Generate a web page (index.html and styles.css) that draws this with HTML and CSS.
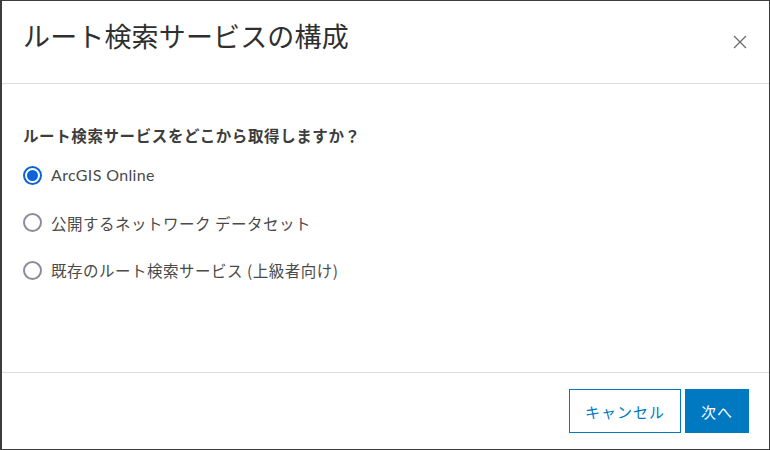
FILE: index.html
```html
<!DOCTYPE html>
<html lang="ja">
<head>
<meta charset="utf-8">
<title>ルート検索サービスの構成</title>
<link rel="stylesheet" href="styles.css">
</head>
<body>
<div class="dialog">
  <header class="dlg-header">
    <h1 class="dlg-title">ルート検索サービスの構成</h1>
    <button class="dlg-close" aria-label="閉じる">
      <svg width="14" height="14" viewBox="0 0 14 14"><path d="M1 1 L13 13 M13 1 L1 13" stroke="#6b6b6b" stroke-width="1.3" fill="none"/></svg>
    </button>
  </header>
  <main class="dlg-body">
    <p class="question">ルート検索サービスをどこから取得しますか？</p>
    <div class="options">
      <label class="option"><span class="radio checked"></span><span class="opt-label latin">ArcGIS Online</span></label>
      <label class="option"><span class="radio"></span><span class="opt-label">公開するネットワーク データセット</span></label>
      <label class="option"><span class="radio"></span><span class="opt-label">既存のルート検索サービス (上級者向け)</span></label>
    </div>
  </main>
  <footer class="dlg-footer">
    <button class="btn btn-outline">キャンセル</button>
    <button class="btn btn-primary">次へ</button>
  </footer>
</div>
</body>
</html>
```
FILE: styles.css
```css
html, body {
  margin: 0;
  padding: 0;
  background: #ffffff;
}
body {
  font-family: "Noto Sans CJK JP", "Noto Sans", sans-serif;
  color: #4a4a4a;
}
.dialog {
  box-sizing: border-box;
  width: 770px;
  height: 450px;
  border: 1px solid #3c3c3c;
  border-left-width: 2px;
  display: flex;
  flex-direction: column;
  background: #fff;
}
.dlg-header {
  height: 82px;
  border-bottom: 1px solid #dddddd;
  display: flex;
  justify-content: space-between;
  align-items: center;
  padding: 0 20px 0 21px;
  flex: none;
}
.dlg-title {
  margin: 0 0 13px 0;
  font-size: 27px;
  font-weight: 400;
  line-height: 40px;
  color: #2f2f2f;
  letter-spacing: 0.15px;
}
.dlg-close {
  border: 0;
  background: none;
  padding: 0;
  width: 14px;
  height: 14px;
  margin-right: 2px;
  display: flex;
}
.dlg-body {
  flex: 1;
  padding: 0 21px;
}
.question {
  margin: 39px 0 16px 0;
  font-size: 15.5px;
  font-weight: 700;
  line-height: 24px;
  color: #3d3d3d;
  letter-spacing: 0.6px;
}
.options {
  display: flex;
  flex-direction: column;
  gap: 23.5px;
}
.option {
  display: flex;
  align-items: center;
  height: 24px;
  gap: 9px;
}
.radio {
  box-sizing: border-box;
  width: 19px;
  height: 19px;
  border-radius: 50%;
  border: 2px solid #8e8b96;
  flex: none;
  display: flex;
  align-items: center;
  justify-content: center;
}
.radio.checked {
  border-color: #0b64d8;
}
.radio.checked::after {
  content: "";
  width: 11px;
  height: 11px;
  border-radius: 50%;
  background: #0b64d8;
}
.opt-label {
  font-size: 15.5px;
  line-height: 24px;
  color: #4a4a4a;
  letter-spacing: 0.5px;
}
.latin {
  font-family: "Lato", "Noto Sans", sans-serif;
  font-size: 16px;
  letter-spacing: 0.35px;
}
.dlg-footer {
  flex: none;
  border-top: 1px solid #dddddd;
  padding: 16px 20px 16px 0;
  display: flex;
  justify-content: flex-end;
  gap: 4px;
}
.btn {
  box-sizing: border-box;
  height: 44px;
  font-family: "Noto Sans CJK JP", sans-serif;
  font-size: 15px;
  letter-spacing: 1px;
  padding: 0;
  cursor: pointer;
}
.btn-outline {
  width: 112px;
  background: #fff;
  border: 1px solid #0079c1;
  color: #0079c1;
}
.btn-primary {
  width: 64px;
  background: #0079c1;
  border: 1px solid #0079c1;
  color: #fff;
}
```
